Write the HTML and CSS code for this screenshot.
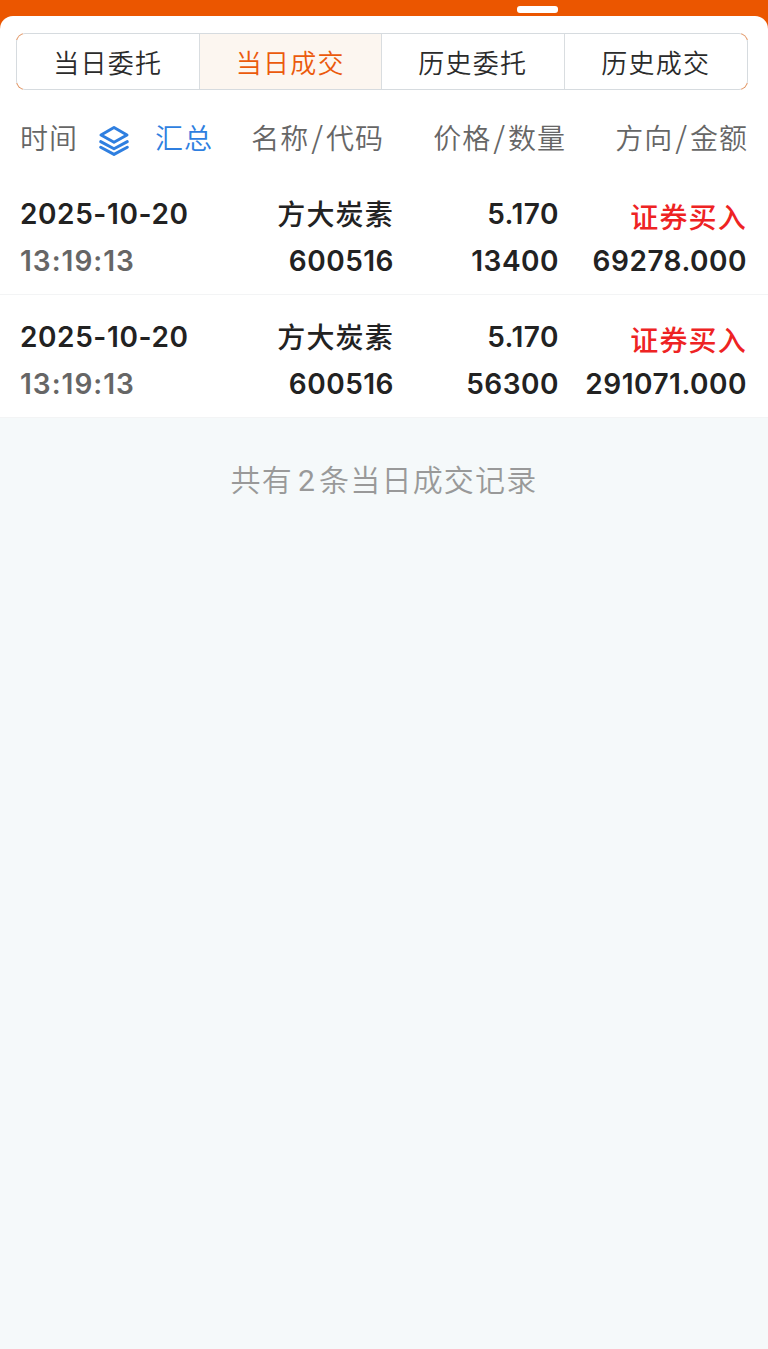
FILE: index.html
```html
<!DOCTYPE html>
<html lang="zh-CN">
<head>
    <meta charset="UTF-8">
    <meta name="viewport" content="width=device-width, initial-scale=1.0">
    <title>当日成交</title>
    <link rel="stylesheet" href="styles.css">
</head>
<body>
    <div class="topbar">
        <div class="indicator"></div>
    </div>
    <div class="panel">
        <div class="tabs">
            <div class="tab">当日委托</div>
            <div class="tab active">当日成交</div>
            <div class="tab">历史委托</div>
            <div class="tab">历史成交</div>
        </div>
        <div class="list-head">
            <div class="time-head">
                <span>时间</span>
                <svg class="layers" viewBox="0 0 32 32" width="32" height="32">
                    <path d="M16 2.5 L29 10 L16 17.3 L3 10 Z"/>
                    <path d="M2.7 16.6 L16 23.7 L29.3 16.6"/>
                    <path d="M2.7 22.3 L16 29.4 L29.3 22.3"/>
                </svg>
                <span class="summary">汇总</span>
            </div>
            <div>名称<span class="slash">/</span>代码</div>
            <div>价格<span class="slash">/</span>数量</div>
            <div>方向<span class="slash">/</span>金额</div>
        </div>
        <div class="row">
            <div class="date">2025-10-20</div>
            <div class="name">方大炭素</div>
            <div>5.170</div>
            <div class="buy">证券买入</div>
            <div class="time">13:19:13</div>
            <div>600516</div>
            <div>13400</div>
            <div>69278.000</div>
        </div>
        <div class="row">
            <div class="date">2025-10-20</div>
            <div class="name">方大炭素</div>
            <div>5.170</div>
            <div class="buy">证券买入</div>
            <div class="time">13:19:13</div>
            <div>600516</div>
            <div>56300</div>
            <div>291071.000</div>
        </div>
    </div>
    <p class="total">共有<span class="count">2</span>条当日成交记录</p>
</body>
</html>
```
FILE: styles.css
```css
* {
    box-sizing: border-box;
}
body {
    margin: 0;
    min-height: 100vh;
    background-color: #f5f9fa;
    font-family: "Noto Sans CJK SC", sans-serif;
    color: #222;
}
.topbar {
    height: 36px;
    padding: 6px 0 0 517px;
    background-color: #eb5600;
}
.indicator {
    width: 41px;
    height: 7px;
    border-radius: 3px;
    background-color: #fff;
}
.panel {
    margin-top: -20px;
    padding-top: 17px;
    background-color: #fff;
    border-radius: 13px 13px 0 0;
}
/* grey edges, orange only on the rounded corners */
.tabs {
    display: grid;
    grid-template-columns: repeat(4, 1fr);
    height: 57px;
    margin: 0 20px 0 16px;
    border: 1px solid transparent;
    border-radius: 9px;
    background:
        linear-gradient(#fff, #fff) padding-box,
        linear-gradient(#d6dbdf, #d6dbdf) center / calc(100% - 14px) 100% no-repeat border-box,
        linear-gradient(#d6dbdf, #d6dbdf) center / 100% calc(100% - 14px) no-repeat border-box,
        linear-gradient(#e0905c, #e0905c) border-box;
}
.tab {
    line-height: 55px;
    text-align: center;
    font-size: 26px;
    font-weight: 350;
    letter-spacing: 1.2px;
    color: #2b2b2b;
}
.tab:not(:last-child) {
    border-right: 1px solid #d9dde0;
}
.tab.active {
    background-color: #fcf6f0;
    color: #eb5a0c;
}
.list-head {
    display: grid;
    grid-template-columns: 210px 154px 182px 182px;
    height: 82px;
    padding: 25px 20px 0 20px;
    line-height: 44px;
    text-align: right;
    font-size: 28px;
    font-weight: 350;
    letter-spacing: 1px;
    color: #666;
}
.slash {
    margin: 0 2px;
    font-size: 30px;
    line-height: 1;
}
.time-head {
    display: flex;
    text-align: left;
}
.layers {
    width: 32px;
    height: 32px;
    margin: 10px 25px 0 20px;
    fill: none;
    stroke: #2f7fe0;
    stroke-width: 3;
    stroke-linejoin: round;
    stroke-linecap: round;
}
.summary {
    color: #2f7fe0;
}
.row {
    display: grid;
    grid-template-columns: 200px 174px 165px 188px;
    grid-template-rows: 47px 47px;
    height: 123px;
    padding: 19px 20px 0 20px;
    border-bottom: 1px solid #f3f4f5;
    line-height: 47px;
    text-align: right;
    font-family: Inter, "Noto Sans CJK SC", sans-serif;
    font-size: 28px;
    font-weight: 600;
    letter-spacing: 0.5px;
    white-space: nowrap;
}
.date,
.time {
    text-align: left;
}
.date {
    letter-spacing: 0.6px;
}
.time {
    letter-spacing: 1px;
    color: #666;
}
.name,
.buy {
    font-weight: 500;
    letter-spacing: 1.2px;
}
.name {
    padding-top: 1px;
}
.buy {
    padding-top: 4px;
    color: #ee2323;
}
.total {
    margin: 38px 0 0;
    line-height: 44px;
    text-align: center;
    font-size: 30px;
    font-weight: 350;
    letter-spacing: 1.2px;
    color: #999;
}
.count {
    margin: 0 3px 0 5px;
    font-family: Roboto, sans-serif;
    font-weight: 400;
}
```
